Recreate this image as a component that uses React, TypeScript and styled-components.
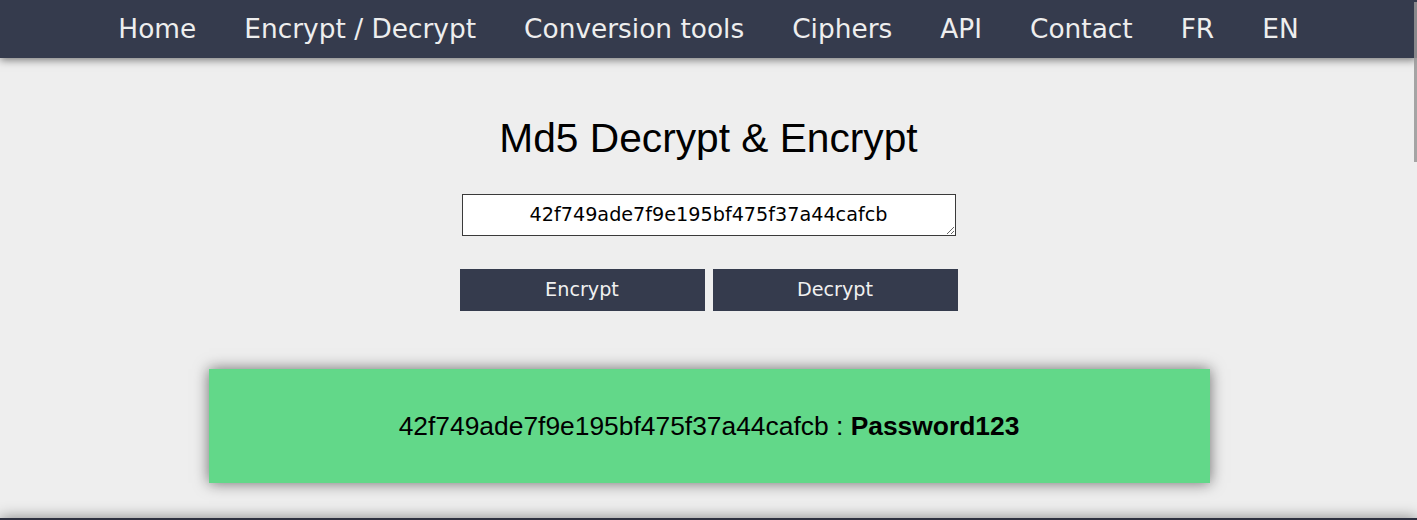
import React from "react";
import styled, { createGlobalStyle } from "styled-components";

const Global = createGlobalStyle`
  html, body { margin: 0; padding: 0; overflow: hidden; }
  body { background: #eeeeee; font-family: "DejaVu Sans", sans-serif; }
`;

const Header = styled.header`
  height: 58px;
  background: #353b4d;
  box-shadow: 0 2px 8px rgba(0, 0, 0, 0.5);
  display: flex;
  align-items: center;
  justify-content: center;
  position: relative;
  z-index: 2;
`;

const NavLink = styled.a`
  font-family: "DejaVu Sans", sans-serif;
  font-size: 26.4px;
  color: #eeeeee;
  text-decoration: none;
  padding: 0 24px;
  line-height: 32px;
`;

const Main = styled.main`
  display: flex;
  flex-direction: column;
  align-items: center;
  padding-top: 57px;
`;

const Title = styled.h1`
  margin: 0;
  font-family: "Liberation Sans", Arial, sans-serif;
  font-weight: 400;
  font-size: 40.7px;
  line-height: 46px;
  color: #000;
`;

const Input = styled.textarea`
  margin-top: 33px;
  width: 494px;
  height: 42px;
  box-sizing: border-box;
  border: 1px solid #3a3a3a;
  background: #fff;
  padding: 8px 4px;
  font-family: "DejaVu Sans", sans-serif;
  font-size: 19.2px;
  line-height: 24px;
  text-align: center;
  color: #000;
  outline: none;
`;

const ButtonRow = styled.div`
  margin-top: 33px;
  display: flex;
  gap: 8px;
`;

const Button = styled.button`
  width: 245px;
  height: 42px;
  border: none;
  background: #353b4d;
  color: #f0f0f0;
  font-family: "DejaVu Sans", sans-serif;
  font-size: 19.2px;
  line-height: 40px;
  cursor: pointer;
  padding: 0;
`;

const Result = styled.div`
  margin-top: 58px;
  margin-left: 1px;
  width: 1001px;
  height: 114px;
  background: #62d889;
  box-shadow: 0 0 14px rgba(0, 0, 0, 0.55);
  display: flex;
  align-items: center;
  justify-content: center;
  font-family: "Liberation Sans", Arial, sans-serif;
  font-size: 26.4px;
  color: #000;
`;

const Strong = styled.b`
  font-weight: 700;
`;

const Footer = styled.footer`
  margin-top: 35px;
  height: 80px;
  background: #2e3140;
  box-shadow: 0 0 14px rgba(0, 0, 0, 0.45);
`;

const ScrollThumb = styled.div`
  position: fixed;
  top: 2px;
  right: 0;
  width: 3px;
  height: 160px;
  background: rgba(150, 150, 150, 0.85);
  z-index: 5;
`;

const links = ["Home", "Encrypt / Decrypt", "Conversion tools", "Ciphers", "API", "Contact", "FR", "EN"];

export default function App() {
  const hash = "42f749ade7f9e195bf475f37a44cafcb";
  return (
    <>
      <Global />
      <Header>
        {links.map((l) => (
          <NavLink key={l} href="#">
            {l}
          </NavLink>
        ))}
      </Header>
      <Main>
        <Title>Md5 Decrypt &amp; Encrypt</Title>
        <Input defaultValue={hash} />
        <ButtonRow>
          <Button>Encrypt</Button>
          <Button>Decrypt</Button>
        </ButtonRow>
        <Result>
          <span>
            {hash} : <Strong>Password123</Strong>
          </span>
        </Result>
      </Main>
      <Footer />
      <ScrollThumb />
    </>
  );
}
